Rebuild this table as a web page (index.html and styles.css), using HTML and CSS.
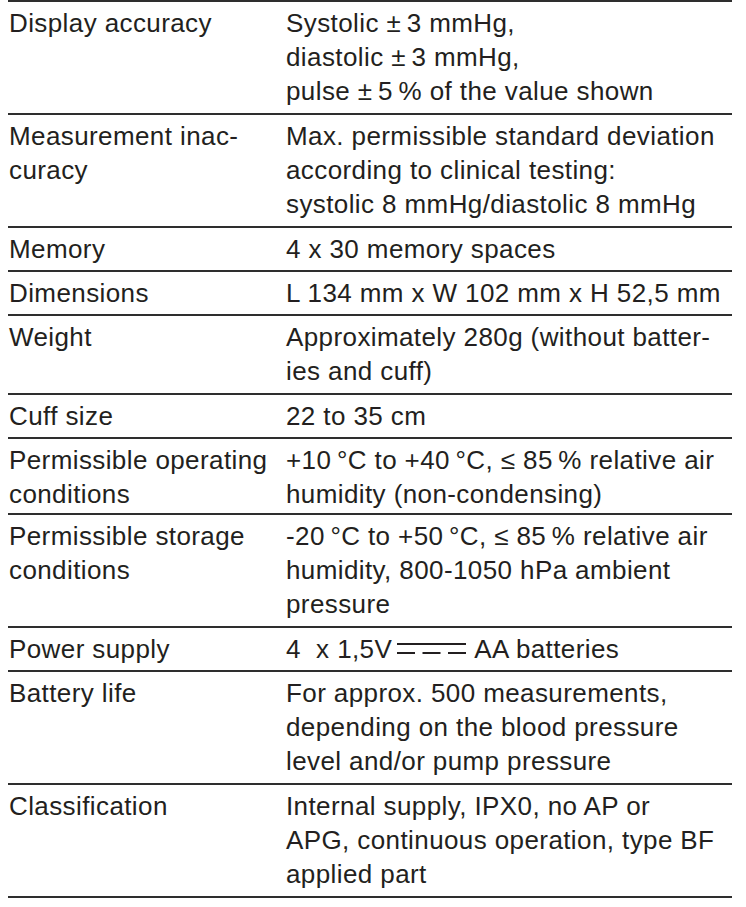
FILE: index.html
```html
<!DOCTYPE html>
<html>
<head>
<meta charset="utf-8">
<link rel="stylesheet" href="styles.css">
</head>
<body>
<div class="spec">
  <div class="row r3"><div class="k">Display accuracy</div><div class="v">Systolic ±&#8201;3 mmHg,<br>diastolic ±&#8201;3 mmHg,<br>pulse ±&#8201;5&#8201;% of the value shown</div></div>
  <div class="row r3"><div class="k">Measurement inac-<br>curacy</div><div class="v">Max. permissible standard deviation<br>according to clinical testing:<br>systolic 8 mmHg/diastolic 8 mmHg</div></div>
  <div class="row"><div class="k">Memory</div><div class="v">4 x 30 memory spaces</div></div>
  <div class="row"><div class="k">Dimensions</div><div class="v">L 134 mm x W 102 mm x H 52,5 mm</div></div>
  <div class="row r2"><div class="k">Weight</div><div class="v">Approximately 280g (without batter-<br>ies and cuff)</div></div>
  <div class="row"><div class="k">Cuff size</div><div class="v">22 to 35 cm</div></div>
  <div class="row r2b"><div class="k">Permissible operating<br>conditions</div><div class="v">+10&#8201;°C to +40&#8201;°C, ≤ 85&#8201;% relative air<br>humidity (non-condensing)</div></div>
  <div class="row r3"><div class="k">Permissible storage<br>conditions</div><div class="v">-20&#8201;°C to +50&#8201;°C, ≤ 85&#8201;% relative air<br>humidity, 800-1050 hPa ambient<br>pressure</div></div>
  <div class="row"><div class="k">Power supply</div><div class="v">4 &nbsp;x 1,5V<svg class="dc" width="69" height="14" viewBox="0 0 69 14"><rect x="0" y="1" width="69" height="2" fill="#231f20"/><rect x="0" y="10" width="18" height="2" fill="#231f20"/><rect x="25.5" y="10" width="18" height="2" fill="#231f20"/><rect x="51" y="10" width="18" height="2" fill="#231f20"/></svg>AA batteries</div></div>
  <div class="row r3"><div class="k">Battery life</div><div class="v">For approx. 500 measurements,<br>depending on the blood pressure<br>level and/or pump pressure</div></div>
  <div class="row r3 last"><div class="k">Classification</div><div class="v">Internal supply, IPX0, no AP or<br>APG, continuous operation, type BF<br>applied part</div></div>
</div>
</body>
</html>
```
FILE: styles.css
```css
html, body {
  margin: 0;
  padding: 0;
  background: #ffffff;
}
body {
  font-family: "Liberation Sans", Arial, sans-serif;
  color: #231f20;
}
.spec {
  width: 724px;
  margin-left: 8px;
  border-top: 2px solid #2e2e2e;
}
.row {
  display: grid;
  grid-template-columns: 278px 1fr;
  border-bottom: 2px solid #2e2e2e;
  height: 42px;
  box-sizing: content-box;
}
.row.r2 { height: 77px; }
.row.r2b { height: 74px; }
.row.r3 { height: 111px; }
.k, .v {
  font-size: 26px;
  line-height: 34px;
  letter-spacing: 0.4px;
  padding-top: 4px;
  white-space: nowrap;
}
.k { padding-left: 1px; }
.dc {
  display: inline-block;
  vertical-align: baseline;
  margin: 0 8px 0 5px;
  position: relative;
  top: -2px;
}
```
